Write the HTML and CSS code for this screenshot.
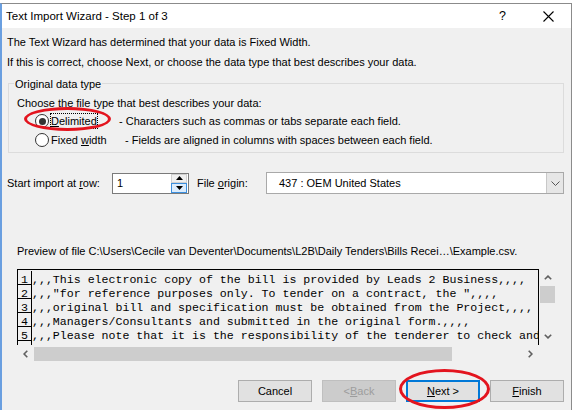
FILE: index.html
```html
<!DOCTYPE html>
<html>
<head>
<meta charset="utf-8">
<link rel="stylesheet" href="styles.css">
</head>
<body>
<div class="dialog">
  <div class="titlebar">
    <span class="title">Text Import Wizard - Step 1 of 3</span>
    <span class="tb-help">?</span>
    <span class="tb-close"><svg width="11" height="11" viewBox="0 0 11 11"><path d="M0.5 0.5L10.5 10.5M10.5 0.5L0.5 10.5" stroke="#000" stroke-width="1.1" fill="none"/></svg></span>
  </div>
  <div class="content">
    <p class="line">The Text Wizard has determined that your data is Fixed Width.</p>
    <p class="line">If this is correct, choose Next, or choose the data type that best describes your data.</p>
    <div class="group">
      <div class="legend">Original data type</div>
      <div class="choose">Choose the file type that best describes your data:</div>
      <div class="opt">
        <span class="opt-main w1"><span class="radio checked"></span><span class="optlabel focus"><u>D</u>elimited</span></span>
        <span class="desc">- Characters such as commas or tabs separate each field.</span>
      </div>
      <div class="opt opt2">
        <span class="opt-main w2"><span class="radio"></span><span class="optlabel">Fixed <u>w</u>idth</span></span>
        <span class="desc">- Fields are aligned in columns with spaces between each field.</span>
      </div>
    </div>
    <div class="importrow">
      <span class="lbl lbl-row">Start import at <u>r</u>ow:</span>
      <div class="spin">
        <span class="spin-val">1</span>
        <div class="spin-btns">
          <span class="spin-up"><svg width="7" height="4" viewBox="0 0 7 4"><path d="M0 4L3.5 0L7 4Z" fill="#000"/></svg></span>
          <span class="spin-down"><svg width="7" height="4" viewBox="0 0 7 4"><path d="M0 0L3.5 4L7 0Z" fill="#000"/></svg></span>
        </div>
      </div>
      <span class="lbl lbl-origin">File <u>o</u>rigin:</span>
      <div class="combo">
        <span class="combo-val">437 : OEM United States</span>
        <span class="combo-btn"><svg width="9" height="5" viewBox="0 0 9 5"><path d="M0.5 0.5L4.5 4.5L8.5 0.5" stroke="#555" stroke-width="1" fill="none"/></svg></span>
      </div>
    </div>
    <div class="preview-label">Preview of file C:\Users\Cecile van Deventer\Documents\L2B\Daily Tenders\Bills Recei…\Example.csv.</div>
    <div class="preview">
      <div class="pv-text">
        <div class="pv-row"><span class="ln">1</span><span class="pv-line">,,,This electronic copy of the bill is provided by Leads 2 Business,,,,</span></div>
        <div class="pv-row"><span class="ln">2</span><span class="pv-line">,,,"for reference purposes only. To tender on a contract, the ",,,,</span></div>
        <div class="pv-row"><span class="ln">3</span><span class="pv-line">,,,original bill and specification must be obtained from the Project,,,,</span></div>
        <div class="pv-row"><span class="ln">4</span><span class="pv-line">,,,Managers/Consultants and submitted in the original form.,,,,</span></div>
        <div class="pv-row"><span class="ln">5</span><span class="pv-line">,,,Please note that it is the responsibility of the tenderer to check and verify,,,,</span></div>
        <div class="pv-row"><span class="ln">6</span><span class="pv-line">,,,the information contained in this bill,,,,</span></div>
      </div>
      <div class="vscroll">
        <span class="sb-arrow"><svg width="8" height="5" viewBox="0 0 8 5"><path d="M0.8 4.3L4 1.1L7.2 4.3" stroke="#606060" stroke-width="1.6" fill="none"/></svg></span>
        <span class="vthumb"></span>
        <span class="vtrack"></span>
        <span class="sb-arrow"><svg width="8" height="5" viewBox="0 0 8 5"><path d="M0.8 0.7L4 3.9L7.2 0.7" stroke="#606060" stroke-width="1.6" fill="none"/></svg></span>
      </div>
      <div class="hscroll">
        <span class="sb-arrow"><svg width="5" height="8" viewBox="0 0 5 8"><path d="M4.3 0.8L1.1 4L4.3 7.2" stroke="#606060" stroke-width="1.6" fill="none"/></svg></span>
        <span class="hthumb"></span>
        <span class="htrack"></span>
        <span class="sb-arrow"><svg width="5" height="8" viewBox="0 0 5 8"><path d="M0.7 0.8L3.9 4L0.7 7.2" stroke="#606060" stroke-width="1.6" fill="none"/></svg></span>
      </div>
      <div class="corner"></div>
    </div>
    <div class="buttons">
      <button class="btn">Cancel</button>
      <button class="btn disabled">&lt; <u>B</u>ack</button>
      <button class="btn default"><u>N</u>ext &gt;</button>
      <button class="btn"><u>F</u>inish</button>
    </div>
  </div>
</div>
<div class="ring ring-delim"></div>
<div class="ring ring-next"></div>
</body>
</html>
```

FILE: styles.css
```css
html, body {
  margin: 0;
  padding: 0;
}
body {
  width: 574px;
  height: 410px;
  overflow: hidden;
  position: relative;
  background: #fff;
  font-family: "Liberation Sans", Arial, sans-serif;
  font-size: 11px;
  color: #000;
}
.dialog {
  margin-top: 3px;
  width: 572px;
  height: 420px;
  box-sizing: border-box;
  border: 1px solid #8b8b8b;
  border-left: 2px solid #6a9fe0;
  background: #f0f0f0;
}
.titlebar {
  display: flex;
  align-items: center;
  height: 24px;
  background: #fff;
  padding-left: 4px;
}
.title {
  flex: 1;
  font-size: 11.5px;
}
.tb-help {
  width: 45px;
  text-align: center;
  font-size: 12.5px;
}
.tb-close {
  width: 46px;
  display: flex;
  justify-content: center;
  align-items: center;
}
.content {
  padding: 4px 7px 0 5px;
}
.line {
  margin: 0;
  line-height: 20px;
  white-space: nowrap;
}
.group {
  margin: 11px 0 0 1px;
  width: 556px;
  height: 70px;
  box-sizing: border-box;
  border: 1px solid #dcdcdc;
  padding-left: 8px;
}
.legend {
  width: max-content;
  margin: -8px 0 0 -3px;
  padding: 0 1px;
  line-height: 16px;
  background: #f0f0f0;
}
.choose {
  margin-top: 3px;
  line-height: 17px;
}
.opt {
  display: flex;
  align-items: center;
  height: 18px;
  padding-left: 18px;
}
.opt2 {
  margin-top: 1px;
}
.opt-main {
  display: flex;
  align-items: center;
}
.w1 { width: 84px; }
.w2 { width: 90px; }
.radio {
  width: 14px;
  height: 14px;
  box-sizing: border-box;
  border: 1px solid #333;
  border-radius: 50%;
  background: #fff;
  margin-right: 1px;
  display: flex;
  align-items: center;
  justify-content: center;
  flex: none;
}
.radio.checked::after {
  content: "";
  width: 7px;
  height: 7px;
  border-radius: 50%;
  background: #333;
}
.optlabel {
  border: 1px dotted transparent;
  line-height: 14px;
}
.optlabel.focus {
  border-color: #000;
}
.importrow {
  display: flex;
  align-items: center;
  height: 22px;
  margin-top: 19px;
}
.lbl-row { width: 105px; }
.lbl-origin { width: 69px; margin-left: 8px; }
.spin {
  width: 77px;
  height: 21px;
  box-sizing: border-box;
  border: 1px solid #7a7a7a;
  background: #fff;
  display: flex;
  align-items: center;
}
.spin-val {
  flex: 1;
  padding-left: 4px;
}
.spin-btns {
  width: 16px;
  height: 19px;
  display: flex;
  flex-direction: column;
  margin-right: 1px;
}
.spin-up, .spin-down {
  flex: 1;
  display: flex;
  align-items: center;
  justify-content: center;
  box-sizing: border-box;
}
.spin-up {
  border: 1px solid #d0d0d0;
  background: #f0f0f0;
}
.spin-down {
  border: 1px solid #3c8fde;
  background: #dcecfc;
}
.combo {
  width: 298px;
  height: 22px;
  box-sizing: border-box;
  border: 1px solid #a9a9a9;
  background: #fff;
  display: flex;
  align-items: center;
}
.combo-val {
  flex: 1;
  padding-left: 12px;
}
.combo-btn {
  width: 16px;
  height: 20px;
  background: #e6e6e6;
  border-left: 1px solid #c8c8c8;
  display: flex;
  align-items: center;
  justify-content: center;
}
.preview-label {
  margin: 47px 0 0 10px;
  line-height: 20px;
  white-space: nowrap;
}
.preview {
  margin: 8px 0 0 10px;
  display: grid;
  grid-template-columns: 522px 17px;
  grid-template-rows: 76px 17px;
  width: 539px;
}
.pv-text {
  box-sizing: border-box;
  border: 1px solid #000;
  border-bottom: none;
  padding-top: 1px;
  overflow: hidden;
  font-family: "Liberation Mono", monospace;
  font-size: 11.6px;
}
.pv-row {
  display: flex;
  height: 14px;
  line-height: 18px;
  white-space: pre;
}
.ln {
  width: 14px;
  height: 14px;
  box-sizing: border-box;
  border-right: 1px solid #000;
  border-bottom: 1px solid #000;
  text-align: center;
  flex: none;
}
.vscroll {
  display: flex;
  flex-direction: column;
  align-items: center;
}
.vscroll .sb-arrow {
  height: 17px;
  width: 17px;
  display: flex;
  align-items: center;
  justify-content: center;
  flex: none;
}
.vthumb {
  width: 15px;
  height: 17px;
  background: #cdcdcd;
  flex: none;
}
.vtrack { flex: 1; }
.hscroll {
  display: flex;
  align-items: center;
}
.hscroll .sb-arrow {
  width: 17px;
  height: 17px;
  display: flex;
  align-items: center;
  justify-content: center;
  flex: none;
}
.hthumb {
  width: 418px;
  height: 14px;
  background: #cdcdcd;
  flex: none;
}
.htrack { flex: 1; }
.buttons {
  display: flex;
  justify-content: flex-end;
  gap: 10px;
  margin-top: 18px;
}
.btn {
  width: 74px;
  height: 22px;
  box-sizing: border-box;
  border: 1px solid #adadad;
  background: #e1e1e1;
  font-family: inherit;
  font-size: 11px;
  color: #000;
  padding: 0;
  margin: 0;
  display: flex;
  align-items: center;
  justify-content: center;
}
.btn.default {
  border: 2px solid #0078d7;
}
.btn.disabled {
  background: #cccccc;
  border-color: #bfbfbf;
  color: #9d9d9d;
}
u {
  text-decoration: underline;
  text-underline-offset: 1px;
}
.ring {
  position: absolute;
  box-sizing: border-box;
  border: 3px solid #e3141e;
  border-radius: 50%;
}
.ring-delim {
  left: 24px;
  top: 107px;
  width: 87px;
  height: 24px;
}
.ring-next {
  left: 399px;
  top: 369px;
  width: 91px;
  height: 40px;
}
```
